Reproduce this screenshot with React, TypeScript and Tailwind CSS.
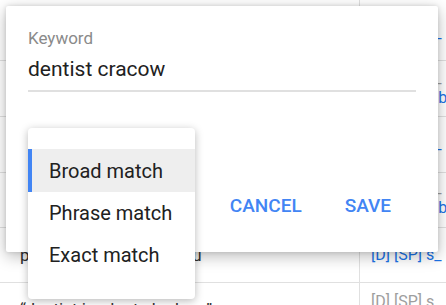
import React from "react";

type Line = { t: string; c: string };
type Row = { h: string; left: string; leftPad: string; rightPad: string; right: Line[] };

const blue = "text-[#1a73e8]";
const gray = "text-[#9e9e9e]";

const rows: Row[] = [
  { h: "h-[61px]", left: "", leftPad: "pt-[20px]", rightPad: "pt-[23px]", right: [{ t: "[D] [SP] s_", c: blue }] },
  { h: "h-[56px]", left: "", leftPad: "pt-[20px]", rightPad: "pt-[7px]", right: [{ t: "[D] [SP] s_", c: gray }, { t: "[D] [SP] s bo", c: blue }] },
  { h: "h-[56px]", left: "", leftPad: "pt-[20px]", rightPad: "pt-[17px]", right: [{ t: "[D] [SP] s_", c: blue }] },
  { h: "h-[55px]", left: "", leftPad: "pt-[20px]", rightPad: "pt-[5px]", right: [{ t: "[D] [SP] s_", c: gray }, { t: "[D] [SP] s bo", c: blue }] },
  { h: "h-[55px]", left: "pediatric dentist krako u", leftPad: "pt-[17px]", rightPad: "pt-[17px]", right: [{ t: "[D] [SP] s_", c: blue }] },
  { h: "h-[56px]", left: "“dentist implants krakow”", leftPad: "pt-[16px]", rightPad: "pt-[9px]", right: [{ t: "[D] [SP] s", c: gray }] },
];

export default function App() {
  return (
    <div
      className="relative w-[446px] h-[305px] overflow-hidden bg-white"
      style={{ fontFamily: "Roboto, 'Liberation Sans', sans-serif" }}
    >
      {/* background table */}
      <div className="flex flex-col">
        {rows.map((r, i) => (
          <div key={i} className={`flex ${r.h} border-b border-[#e0e0e0] shrink-0`}>
            <div className={`w-[359px] ${r.leftPad} pl-[20px] text-[17px] leading-[20px] text-[#333] whitespace-nowrap overflow-hidden`}>
              {r.left}
            </div>
            <div className={`flex-1 border-l border-[#e0e0e0] pl-[11px] ${r.rightPad} flex flex-col text-[16px] leading-[20px] whitespace-nowrap overflow-hidden`}>
              {r.right.map((x, j) => (
                <span key={j} className={x.c}>{x.t}</span>
              ))}
            </div>
          </div>
        ))}
      </div>

      {/* dialog */}
      <div className="absolute left-[6px] top-[6px] w-[432px] h-[246px] bg-white rounded-[2px] shadow-[0_4px_16px_rgba(0,0,0,0.28),0_0_4px_rgba(0,0,0,0.12)]">
        <div className="pl-[22px] pr-[22px] pt-[22px]">
          <div className="text-[17px] leading-5 text-[#8a8a8a]">Keyword</div>
          <div className="mt-[9px] text-[21px] leading-6 text-[#212121]">dentist cracow</div>
          <div className="mt-[9px] h-[2px] bg-[#e0e0e0]"></div>
        </div>
        <div className="absolute right-[47px] top-[188px] flex items-center gap-[43px]">
          <span className="text-[19px] leading-6 font-medium text-[#4285f4]">CANCEL</span>
          <span className="text-[19px] leading-6 font-medium text-[#4285f4]">SAVE</span>
        </div>

        {/* dropdown menu */}
        <div className="absolute left-[22px] top-[122px] w-[167px] h-[171px] bg-white rounded-[4px] shadow-[0_2px_8px_rgba(0,0,0,0.28)] pt-[21px]">
          <div className="relative h-[43px] bg-[#eeeeee] flex items-center pl-[21px] text-[20px] text-[#212121]">
            <div className="absolute left-0 top-0 bottom-0 w-[4px] bg-[#4285f4]"></div>
            Broad match
          </div>
          <div className="h-[42px] flex items-center pl-[21px] text-[20px] text-[#212121]">Phrase match</div>
          <div className="h-[42px] flex items-center pl-[21px] text-[20px] text-[#212121]">Exact match</div>
        </div>
      </div>
    </div>
  );
}
